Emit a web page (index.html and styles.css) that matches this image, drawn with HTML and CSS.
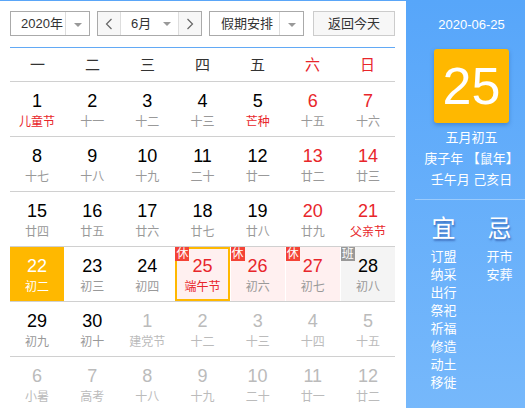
FILE: index.html
```html
<!DOCTYPE html>
<html lang="zh-CN">
<head>
<meta charset="utf-8">
<title>万年历</title>
<link rel="stylesheet" href="styles.css">
</head>
<body>
<div class="widget">
  <div class="main">
    <div class="controls">
      <div class="sel year">
        <span class="val">2020年</span>
        <span class="drop"><i class="tri"></i></span>
      </div>
      <div class="sel month">
        <span class="nav"><svg width="8" height="12" viewBox="0 0 8 12"><polyline points="6.5,1 1.5,6 6.5,11" fill="none" stroke="#666" stroke-width="1.2"/></svg></span>
        <span class="mval"><span>6月</span><i class="tri"></i></span>
        <span class="nav right"><svg width="8" height="12" viewBox="0 0 8 12"><polyline points="1.5,1 6.5,6 1.5,11" fill="none" stroke="#666" stroke-width="1.2"/></svg></span>
      </div>
      <div class="sel holiday">
        <span class="val">假期安排</span>
        <span class="drop"><i class="tri"></i></span>
      </div>
      <div class="today-btn">返回今天</div>
    </div>
    <div class="rule"></div>
    <div class="weekdays">
      <span>一</span><span>二</span><span>三</span><span>四</span><span>五</span><span class="wk">六</span><span class="wk">日</span>
    </div>
    <div class="grid">
      <div class="row">
        <div class="cell"><b>1</b><em class="fest">儿童节</em></div>
        <div class="cell"><b>2</b><em>十一</em></div>
        <div class="cell"><b>3</b><em>十二</em></div>
        <div class="cell"><b>4</b><em>十三</em></div>
        <div class="cell"><b>5</b><em class="fest">芒种</em></div>
        <div class="cell wkd"><b>6</b><em>十五</em></div>
        <div class="cell wkd"><b>7</b><em>十六</em></div>
      </div>
      <div class="row">
        <div class="cell"><b>8</b><em>十七</em></div>
        <div class="cell"><b>9</b><em>十八</em></div>
        <div class="cell"><b>10</b><em>十九</em></div>
        <div class="cell"><b>11</b><em>二十</em></div>
        <div class="cell"><b>12</b><em>廿一</em></div>
        <div class="cell wkd"><b>13</b><em>廿二</em></div>
        <div class="cell wkd"><b>14</b><em>廿三</em></div>
      </div>
      <div class="row">
        <div class="cell"><b>15</b><em>廿四</em></div>
        <div class="cell"><b>16</b><em>廿五</em></div>
        <div class="cell"><b>17</b><em>廿六</em></div>
        <div class="cell"><b>18</b><em>廿七</em></div>
        <div class="cell"><b>19</b><em>廿八</em></div>
        <div class="cell wkd"><b>20</b><em>廿九</em></div>
        <div class="cell wkd"><b>21</b><em class="fest">父亲节</em></div>
      </div>
      <div class="row">
        <div class="cell selected"><b>22</b><em>初二</em></div>
        <div class="cell"><b>23</b><em>初三</em></div>
        <div class="cell"><b>24</b><em>初四</em></div>
        <div class="cell rest today"><span class="badge">休</span><b>25</b><em class="fest">端午节</em></div>
        <div class="cell rest"><span class="badge">休</span><b>26</b><em>初六</em></div>
        <div class="cell rest"><span class="badge">休</span><b>27</b><em>初七</em></div>
        <div class="cell work"><span class="badge gray">班</span><b>28</b><em>初八</em></div>
      </div>
      <div class="row">
        <div class="cell"><b>29</b><em>初九</em></div>
        <div class="cell"><b>30</b><em>初十</em></div>
        <div class="cell dim"><b>1</b><em>建党节</em></div>
        <div class="cell dim"><b>2</b><em>十二</em></div>
        <div class="cell dim"><b>3</b><em>十三</em></div>
        <div class="cell dim"><b>4</b><em>十四</em></div>
        <div class="cell dim"><b>5</b><em>十五</em></div>
      </div>
      <div class="row">
        <div class="cell dim"><b>6</b><em>小暑</em></div>
        <div class="cell dim"><b>7</b><em>高考</em></div>
        <div class="cell dim"><b>8</b><em>十八</em></div>
        <div class="cell dim"><b>9</b><em>十九</em></div>
        <div class="cell dim"><b>10</b><em>二十</em></div>
        <div class="cell dim"><b>11</b><em>廿一</em></div>
        <div class="cell dim"><b>12</b><em>廿二</em></div>
      </div>
    </div>
  </div>
  <div class="side">
    <div class="date">2020-06-25</div>
    <div class="bigday">25</div>
    <div class="lunar">
      <div>五月初五</div>
      <div>庚子年 【鼠年】</div>
      <div>壬午月 己亥日</div>
    </div>
    <div class="sep"></div>
    <div class="yiji">
      <div class="col">
        <div class="head">宜</div>
        <div>订盟</div><div>纳采</div><div>出行</div><div>祭祀</div><div>祈福</div><div>修造</div><div>动土</div><div>移徙</div>
      </div>
      <div class="col">
        <div class="head">忌</div>
        <div>开市</div><div>安葬</div>
      </div>
    </div>
  </div>
</div>
</body>
</html>
```

FILE: styles.css
```css
html, body {
  margin: 0;
  padding: 0;
  background: #fff;
}
body {
  font-family: "Liberation Sans", "Noto Sans CJK SC", sans-serif;
  color: #333;
}
.widget {
  display: flex;
  width: 525px;
  height: 408px;
  overflow: hidden;
}
.main {
  width: 406px;
  box-sizing: border-box;
  border-top: 1px solid #5aa6f8;
  padding: 10px 0 0 10px;
}
.controls {
  display: flex;
  height: 25px;
  font-size: 13px;
  white-space: nowrap;
}
.sel {
  display: flex;
  box-sizing: border-box;
  height: 25px;
  border: 1px solid #aaa;
  line-height: 23px;
}
.tri {
  display: inline-block;
  width: 0;
  height: 0;
  border-left: 4px solid transparent;
  border-right: 4px solid transparent;
  border-top: 4px solid #999;
  vertical-align: middle;
}
.year { width: 80px; }
.year .val { width: 54px; padding-left: 10px; box-sizing: border-box; }
.drop {
  flex: 1;
  border-left: 1px solid #ddd;
  text-align: center;
}
.month { width: 105px; margin-left: 7px; }
.nav {
  width: 22px;
  flex: none;
  background: #f7f7f7;
  display: flex;
  align-items: center;
  justify-content: center;
  border-right: 1px solid #ddd;
}
.nav.right { border-right: 0; border-left: 1px solid #ddd; }
.mval {
  flex: 1;
  padding: 0 7px 0 10px;
  display: flex;
  align-items: center;
  justify-content: space-between;
}
.holiday { width: 95px; margin-left: 7px; }
.holiday .val { width: 69px; padding-left: 11px; box-sizing: border-box; }
.today-btn {
  width: 82px;
  margin-left: 9px;
  box-sizing: border-box;
  border: 1px solid #ccc;
  background: #f7f7f7;
  text-align: center;
  line-height: 23px;
}
.rule {
  width: 385px;
  height: 1px;
  background: #62a9f5;
  margin-top: 11px;
}
.weekdays {
  width: 385px;
  display: grid;
  grid-template-columns: repeat(7, 1fr);
  height: 33px;
  line-height: 33px;
  text-align: center;
  font-size: 15px;
  color: #333;
}
.weekdays .wk { color: #e8262b; }
.grid { width: 385px; }
.row {
  display: grid;
  grid-template-columns: repeat(7, 1fr);
  column-gap: 1px;
  border-top: 1px solid #d0d0d0;
  height: 54px;
}
.cell {
  position: relative;
  box-sizing: border-box;
  height: 54px;
  padding-top: 8px;
  text-align: center;
}
.cell b {
  display: block;
  font-weight: normal;
  font-size: 18px;
  line-height: 22px;
  color: #000;
}
.cell em {
  display: block;
  font-style: normal;
  font-size: 12px;
  line-height: 20px;
  color: #999;
}
.cell em.fest { color: #e8262b; }
.cell.wkd b { color: #e8262b; }
.cell.selected { background: #ffb800; }
.cell.selected b, .cell.selected em { color: #fff; }
.cell.rest { background: #fff0f0; }
.cell.rest b { color: #e8262b; }
.cell.work { background: #f4f4f4; }
.cell.today {
  border: 2px solid #ffb800;
  padding-top: 6px;
}
.cell.dim b, .cell.dim em { color: #bbb; }
.badge {
  position: absolute;
  top: 0;
  left: 0;
  width: 14px;
  height: 14px;
  line-height: 14px;
  font-size: 12px;
  text-align: center;
  color: #fff;
  background: #f44336;
}
.badge.gray { background: #999; }
.cell.today .badge { top: -2px; left: -2px; }

.side {
  width: 119px;
  box-sizing: border-box;
  padding-left: 12px;
  background: linear-gradient(#57a6fa, #76b8fb);
  color: #fff;
  text-align: center;
}
.date {
  font-size: 13px;
  line-height: 18px;
  margin-top: 16px;
}
.bigday {
  width: 75px;
  height: 74px;
  margin: 15px auto 0;
  background: #ffb800;
  border-radius: 3px;
  box-shadow: 0 2px 4px rgba(20, 70, 140, 0.35);
  font-size: 52px;
  line-height: 74px;
}
.lunar {
  margin-top: 4px;
  font-size: 13px;
  line-height: 21px;
}
.sep {
  height: 1px;
  background: rgba(255, 255, 255, 0.35);
  margin-top: 9px;
  margin-left: -3px;
}
.yiji {
  display: flex;
  justify-content: center;
  gap: 30px;
  font-size: 13px;
  line-height: 18px;
}
.yiji .head {
  font-size: 24px;
  line-height: 32px;
  margin-top: 13px;
  margin-bottom: 3px;
  text-shadow: 1px 2px 2px rgba(30, 60, 140, 0.55);
}
```
